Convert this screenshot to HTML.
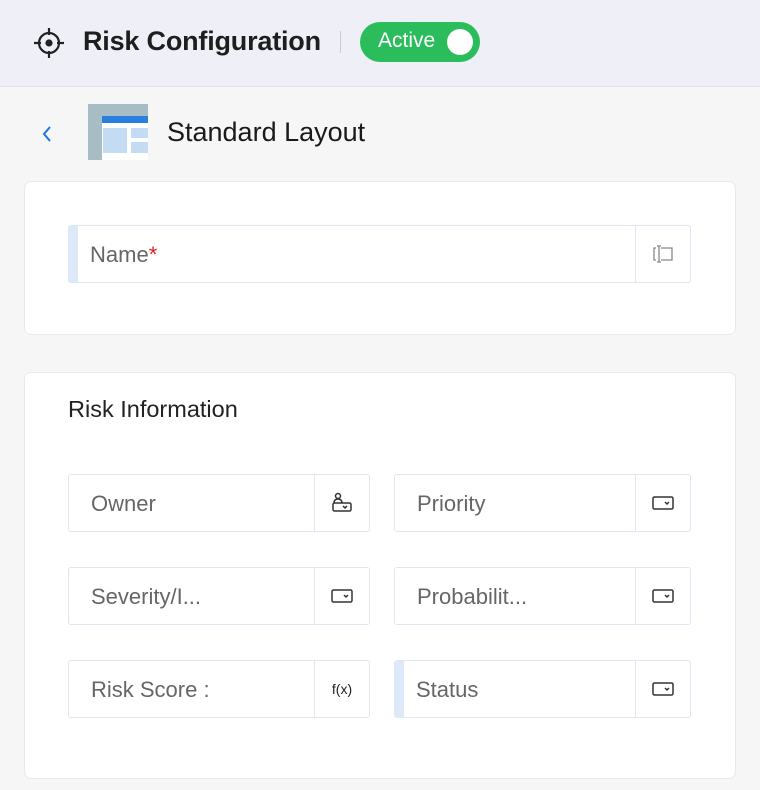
<!DOCTYPE html>
<html><head><style>
*{box-sizing:border-box;margin:0;padding:0}
body{width:760px;height:790px;background:#f6f6f7;font-family:"Liberation Sans",sans-serif;position:relative;overflow:hidden}
.hdr{position:absolute;left:0;top:0;width:760px;height:87px;background:#eff0f7;border-bottom:1px solid #e2e3ea}
.abs{position:absolute}
.card{position:absolute;left:24px;width:712px;background:#fff;border:1px solid #e8e9ee;border-radius:7px}
.f{position:absolute;height:58px;border:1px solid #dfe6f1;border-radius:3px;background:#fff}
.f .l{position:absolute;left:22px;top:16px;font-size:22px;color:#666}
.f .ic{position:absolute;right:0;top:0;width:55px;height:56px;border-left:1px solid #dfe6f1;display:flex;align-items:center;justify-content:center}
.acc{border-left:10px solid #dde8f8}
.acc .l{left:12px}
</style></head><body>
<div class="hdr">
<svg class="abs" style="left:32px;top:26px" width="34" height="34" viewBox="0 0 34 34" fill="none" stroke="#222" stroke-width="2.2"><circle cx="17" cy="17" r="10"/><circle cx="17" cy="17" r="2.5" fill="#222"/><path d="M17 2v7M17 25v7M2 17h7M25 17h7"/></svg>
<div class="abs" style="left:83px;top:26px;font-size:27px;font-weight:bold;color:#1e1e1e;letter-spacing:-0.2px">Risk Configuration</div>
<div class="abs" style="left:340px;top:31px;width:1px;height:22px;background:#ccc"></div>
<div class="abs" style="left:360px;top:22px;width:120px;height:40px;border-radius:20px;background:#2bbd5c"></div>
<div class="abs" style="left:378px;top:29px;font-size:21px;color:#fff">Active</div>
<div class="abs" style="left:447px;top:29px;width:26px;height:26px;border-radius:50%;background:#fff"></div>
</div>
<svg class="abs" style="left:40px;top:124px" width="14" height="20" viewBox="0 0 14 20"><path d="M10 3L4 10l6 7" fill="none" stroke="#1a73e8" stroke-width="2"/></svg>
<svg class="abs" style="left:88px;top:104px" width="60" height="56" viewBox="0 0 60 56"><rect width="60" height="56" fill="#a8bcc6"/><rect x="14" y="12" width="46" height="44" fill="#fff"/><rect x="14" y="12" width="46" height="7" fill="#2a7ee0"/><rect x="15" y="24" width="24" height="25" fill="#c3dcf3"/><rect x="43" y="24" width="17" height="10" fill="#c3dcf3"/><rect x="43" y="38" width="17" height="11" fill="#c3dcf3"/></svg>
<div class="abs" style="left:167px;top:117px;font-size:27px;color:#1a1a1a">Standard Layout</div>

<div class="card" style="top:181px;height:154px"></div>
<div class="f acc" style="left:68px;top:225px;width:623px"><div class="l">Name<span style="color:#e02020">*</span></div><div class="ic"><svg width="24" height="20" viewBox="0 0 24 20" fill="none" stroke="#888" stroke-width="1.3"><path d="M5 4H3v12h2M10 4h11v12H10M8 2v16M6 2h4M6 18h4"/></svg></div></div>

<div class="card" style="top:372px;height:407px"></div>
<div class="abs" style="left:68px;top:396px;font-size:23.5px;color:#222">Risk Information</div>

<div class="f" style="left:68px;top:474px;width:302px"><div class="l">Owner</div><div class="ic"><svg width="24" height="24" viewBox="0 0 24 24" fill="none" stroke="#333" stroke-width="1.5"><circle cx="8" cy="5" r="2.5"/><path d="M4 12c0-3 2-4 4-4s4 1 4 4"/><rect x="3" y="12" width="18" height="8" rx="1.5"/><path d="M13 15l2 2 2-2"/></svg></div></div>
<div class="f" style="left:394px;top:474px;width:297px"><div class="l">Priority</div><div class="ic"><svg width="22" height="14" viewBox="0 0 22 14" fill="none" stroke="#333" stroke-width="1.5"><rect x="1" y="1" width="20" height="12" rx="1.5"/><path d="M13 6l2 2 2-2"/></svg></div></div>
<div class="f" style="left:68px;top:567px;width:302px"><div class="l">Severity/I...</div><div class="ic"><svg width="22" height="14" viewBox="0 0 22 14" fill="none" stroke="#333" stroke-width="1.5"><rect x="1" y="1" width="20" height="12" rx="1.5"/><path d="M13 6l2 2 2-2"/></svg></div></div>
<div class="f" style="left:394px;top:567px;width:297px"><div class="l">Probabilit...</div><div class="ic"><svg width="22" height="14" viewBox="0 0 22 14" fill="none" stroke="#333" stroke-width="1.5"><rect x="1" y="1" width="20" height="12" rx="1.5"/><path d="M13 6l2 2 2-2"/></svg></div></div>
<div class="f" style="left:68px;top:660px;width:302px"><div class="l">Risk Score :</div><div class="ic" style="font-size:14px;color:#222">f(x)</div></div>
<div class="f acc" style="left:394px;top:660px;width:297px"><div class="l">Status</div><div class="ic"><svg width="22" height="14" viewBox="0 0 22 14" fill="none" stroke="#333" stroke-width="1.5"><rect x="1" y="1" width="20" height="12" rx="1.5"/><path d="M13 6l2 2 2-2"/></svg></div></div>
</body></html>
